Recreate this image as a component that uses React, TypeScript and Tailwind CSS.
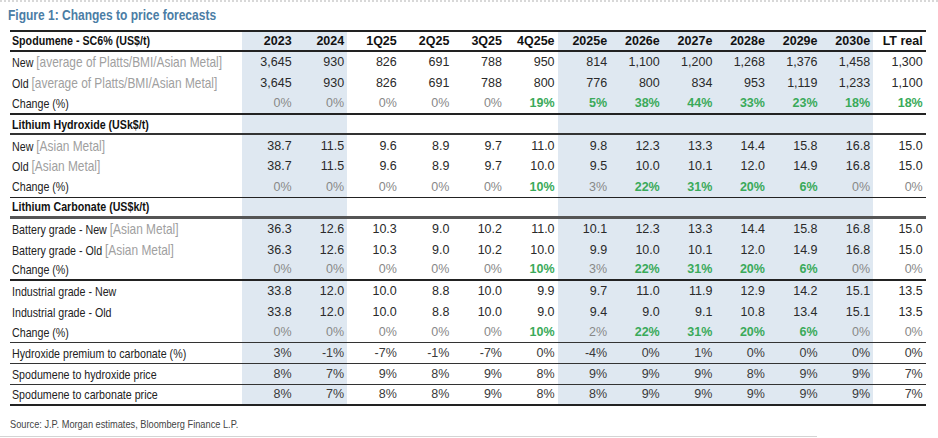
import React from "react";

type Cell = string | { v: string; g?: boolean };

interface Row {
  label: React.ReactNode;
  cells?: Cell[];
  bold?: boolean;
  kind?: "head" | "num" | "chg" | "pct";
  line: string;
}

const shaded = [0, 1, 6, 7, 8, 9, 10, 11];

const cols = ["2023", "2024", "1Q25", "2Q25", "3Q25", "4Q25e", "2025e", "2026e", "2027e", "2028e", "2029e", "2030e", "LT real"];

const chg = (s: string) =>
  s.split(" ").map((t) => (t.endsWith("*") ? { v: t.slice(0, -1), g: true } : { v: t }));

const src = (main: string, note: string) => (
  <>
    {main} <span className="text-[14.5px] text-[#a0a0a0]">{note}</span>
  </>
);

const rows: Row[] = [
  { label: "Spodumene - SC6% (US$/t)", cells: cols, bold: true, kind: "head", line: "border-b-2 border-[#222]" },
  { label: src("New", "[average of Platts/BMI/Asian Metal]"), cells: "3,645 930 826 691 788 950 814 1,100 1,200 1,268 1,376 1,458 1,300".split(" "), kind: "num", line: "" },
  { label: src("Old", "[average of Platts/BMI/Asian Metal]"), cells: "3,645 930 826 691 788 800 776 800 834 953 1,119 1,233 1,100".split(" "), kind: "num", line: "" },
  { label: "Change (%)", cells: chg("0% 0% 0% 0% 0% 19%* 5%* 38%* 44%* 33%* 23%* 18%* 18%*"), kind: "chg", line: "border-b-2 border-[#222]" },
  { label: "Lithium Hydroxide (USk$/t)", bold: true, line: "border-b-2 border-[#333]" },
  { label: src("New", "[Asian Metal]"), cells: "38.7 11.5 9.6 8.9 9.7 11.0 9.8 12.3 13.3 14.4 15.8 16.8 15.0".split(" "), kind: "num", line: "" },
  { label: src("Old", "[Asian Metal]"), cells: "38.7 11.5 9.6 8.9 9.7 10.0 9.5 10.0 10.1 12.0 14.9 16.8 15.0".split(" "), kind: "num", line: "" },
  { label: "Change (%)", cells: chg("0% 0% 0% 0% 0% 10%* 3% 22%* 31%* 20%* 6%* 0% 0%"), kind: "chg", line: "border-b-[1.5px] border-[#222]" },
  { label: "Lithium Carbonate (US$k/t)", bold: true, line: "border-b-[3px] border-[#555]" },
  { label: src("Battery grade - New", "[Asian Metal]"), cells: "36.3 12.6 10.3 9.0 10.2 11.0 10.1 12.3 13.3 14.4 15.8 16.8 15.0".split(" "), kind: "num", line: "" },
  { label: src("Battery grade - Old", "[Asian Metal]"), cells: "36.3 12.6 10.3 9.0 10.2 10.0 9.9 10.0 10.1 12.0 14.9 16.8 15.0".split(" "), kind: "num", line: "" },
  { label: "Change (%)", cells: chg("0% 0% 0% 0% 0% 10%* 3% 22%* 31%* 20%* 6%* 0% 0%"), kind: "chg", line: "border-b-2 border-[#222]" },
  { label: "Industrial grade - New", cells: "33.8 12.0 10.0 8.8 10.0 9.9 9.7 11.0 11.9 12.9 14.2 15.1 13.5".split(" "), kind: "num", line: "" },
  { label: "Industrial grade - Old", cells: "33.8 12.0 10.0 8.8 10.0 9.0 9.4 9.0 9.1 10.8 13.4 15.1 13.5".split(" "), kind: "num", line: "" },
  { label: "Change (%)", cells: chg("0% 0% 0% 0% 0% 10%* 2% 22%* 31%* 20%* 6%* 0% 0%"), kind: "chg", line: "border-b-[1.5px] border-[#333]" },
  { label: "Hydroxide premium to carbonate (%)", cells: "3% -1% -7% -1% -7% 0% -4% 0% 1% 0% 0% 0% 0%".split(" "), kind: "pct", line: "border-b-[1.5px] border-[#333]" },
  { label: "Spodumene to hydroxide price", cells: "8% 7% 9% 8% 9% 8% 9% 9% 9% 8% 9% 9% 7%".split(" "), kind: "pct", line: "border-b-[1.5px] border-[#333]" },
  { label: "Spodumene to carbonate price", cells: "8% 7% 8% 8% 9% 8% 8% 9% 9% 9% 9% 9% 7%".split(" "), kind: "pct", line: "border-b-2 border-[#222]" },
];

function DataCell({ cell, idx, kind }: { cell?: Cell; idx: number; kind?: Row["kind"] }) {
  const c = typeof cell === "string" ? { v: cell } : cell;
  let color = "text-[#2a2a2a]";
  if (kind === "chg") color = c?.g ? "text-[#3aaa5a] font-bold" : "text-[#888]";
  if (kind === "head") color = "text-[#111] font-bold";
  if (kind === "pct") color = "text-[#3a3a3a]";
  return (
    <div
      className={`w-[52.6px] h-full flex items-center justify-end pr-[3px] ${
        shaded.includes(idx) ? "bg-[#dfe8f1]" : ""
      } ${color}`}
    >
      {c?.v}
    </div>
  );
}

export default function App() {
  return (
    <div className="w-[938px] h-[438px] bg-white font-['Liberation_Sans',Arial,sans-serif]">
      <div className="border-t-2 border-dotted border-[#d8d8d8]" />
      <div className="pl-[8px] pt-[1px] h-[27.5px] whitespace-nowrap">
        <span className="inline-block origin-left scale-x-[0.8] text-[15px] font-bold text-[#4b7da5]">
          Figure 1: Changes to price forecasts
        </span>
      </div>
      <div className="ml-[10px] w-[916px] border-t-2 border-[#222] text-[12.5px] leading-none">
        {rows.map((r, i) => (
          <div key={i} className={`flex h-[20.8px] ${r.line}`}>
            <div className="w-[232px] h-full flex items-center pl-[2px] whitespace-nowrap">
              <span
                className={`inline-block origin-left scale-x-[0.82] text-[13px] ${
                  r.bold ? "font-bold text-[#111]" : "text-[#222]"
                }`}
              >
                {r.label}
              </span>
            </div>
            {cols.map((_, j) => (
              <DataCell key={j} idx={j} cell={r.cells?.[j]} kind={r.kind} />
            ))}
          </div>
        ))}
      </div>
      <div className="pl-[10px] pt-[5px] whitespace-nowrap">
        <span className="inline-block origin-left scale-x-[0.84] text-[11px] text-[#444]">
          Source: J.P. Morgan estimates, Bloomberg Finance L.P.
        </span>
      </div>
      <div className="mt-[1px] w-[817px] border-t border-[#d4d4d4]" />
    </div>
  );
}
